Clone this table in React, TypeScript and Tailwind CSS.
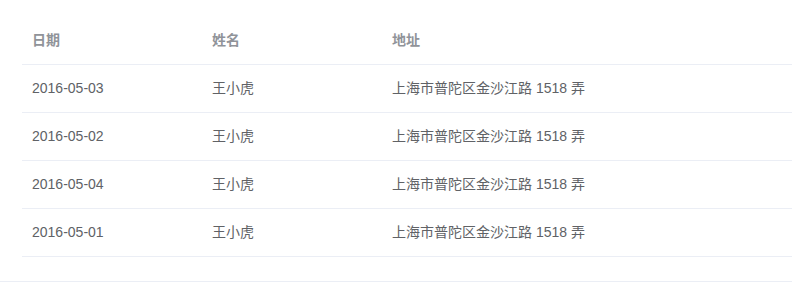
const rows = [
  { date: "2016-05-03", name: "王小虎", address: "上海市普陀区金沙江路 1518 弄" },
  { date: "2016-05-02", name: "王小虎", address: "上海市普陀区金沙江路 1518 弄" },
  { date: "2016-05-04", name: "王小虎", address: "上海市普陀区金沙江路 1518 弄" },
  { date: "2016-05-01", name: "王小虎", address: "上海市普陀区金沙江路 1518 弄" },
];

export default function App() {
  return (
    <div
      className="w-[792px] h-[289px] bg-white text-[14px]"
      style={{ fontFamily: '"Liberation Sans", "Noto Sans CJK SC", sans-serif' }}
    >
      <div className="pt-4 pl-[22px] pb-6 border-b border-[#ebeef5]">
        <div className="flex h-[49px] items-center border-b border-[#ebeef5] font-bold text-[#909399]">
          <div className="w-[180px] px-[10px]">日期</div>
          <div className="w-[180px] px-[10px]">姓名</div>
          <div className="flex-1 px-[10px]">地址</div>
        </div>
        {rows.map((r, i) => (
          <div
            key={i}
            className="flex h-[48px] items-center border-b border-[#ebeef5] text-[#606266]"
          >
            <div className="w-[180px] px-[10px]">{r.date}</div>
            <div className="w-[180px] px-[10px]">{r.name}</div>
            <div className="flex-1 px-[10px]">{r.address}</div>
          </div>
        ))}
      </div>
    </div>
  );
}
